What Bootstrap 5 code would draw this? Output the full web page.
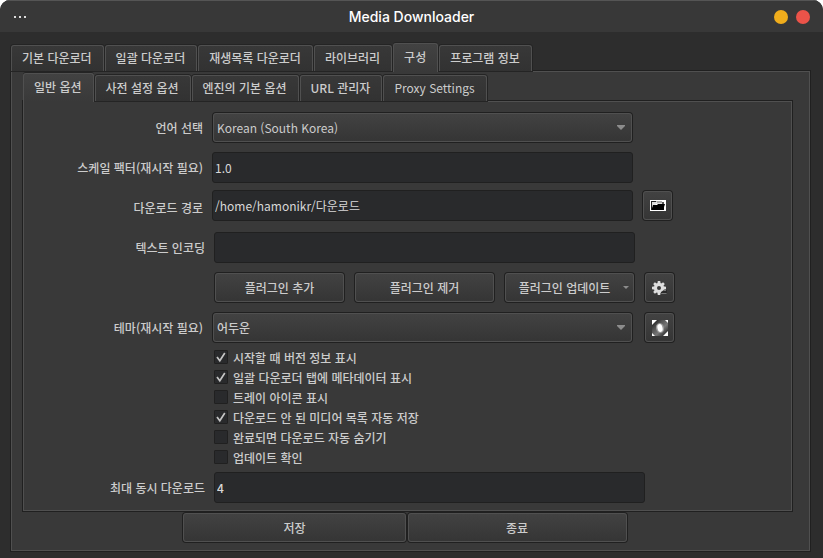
<!DOCTYPE html>
<html lang="ko">
<head>
<meta charset="utf-8">
<meta name="viewport" content="width=device-width, initial-scale=1">
<title>Media Downloader</title>
<link href="https://cdn.jsdelivr.net/npm/bootstrap@5.3.0/dist/css/bootstrap.min.css" rel="stylesheet">
<style>
  :root { --edge: #505050; --rim: #202020; --ink: #cccccc; }
  body { background: #fff; color: var(--ink); font: 500 12px/20px "Noto Sans CJK KR", "Noto Sans", sans-serif; }
  .app-window { background: #2d2d2d; border-radius: 10px 10px 0 0; overflow: hidden; }
  .title-bar { height: 32px; padding: 0 13px; background: #383838; border-top: 1px solid #555; display: grid; grid-template-columns: 1fr auto 1fr; }
  .title-bar h1 { font: 500 14px/20px Inter, sans-serif; color: #fff; }
  .title-bar button { border: 0; padding: 0; background: none; }
  .title-bar .dot-btn { width: 14px; height: 14px; border-radius: 50%; }
  .title-bar .dot-min { background: #f0ad1c; }
  .title-bar .dot-close { background: #eb5349; }
  .page-body { padding: 11px 13px 7px 11px; }
  .tab-strip { gap: 1px; border: 0; position: relative; }
  .tab-strip .nav-link { margin: 0; padding: 2px 11px 3px 10px; color: var(--ink); background: linear-gradient(#383838, #323232); border: 1px solid var(--edge); border-bottom: 0; border-radius: 3px 3px 0 0; box-shadow: 0 0 0 1px #242424; line-height: 20px; }
  .tab-strip .nav-link:hover { color: #fff; border-color: var(--edge); }
  .tab-strip .nav-link.active { color: var(--ink); border-color: var(--edge); background: linear-gradient(#424242, #393939); padding-top: 3px; padding-bottom: 5px; box-shadow: 0 -1px 0 #242424; margin-bottom: -1px; z-index: 1; position: relative; }
  .pane { background: #393939; border: 1px solid var(--edge); box-shadow: 0 0 0 1px var(--rim); }
  .pane-outer { padding: 1px 17px 7px 11px; }
  .pane-inner { padding: 6px 0 2px; }
  .form-line { display: grid; column-gap: 9px; height: 40px; padding-top: 4px; align-items: start; grid-template-columns: 181fr 421fr 147fr; }
  .line-a { grid-template-columns: 179fr 421fr 149fr; }
  .line-theme { grid-template-columns: 179fr 423fr 147fr; }
  .line-spin { grid-template-columns: 181fr 431fr 137fr; }
  .line-path { padding: 2px 0; }
  .form-line > label { text-align: right; white-space: nowrap; line-height: 32px; }
  .line-path > label { align-self: center; }
  .field { height: 31px; padding: 0 2px; font-size: 12px; font-weight: 400; color: #d8d8d8; background: #292a2c; border: 1px solid #202020; border-radius: 3px; }
  .field:focus { color: #fff; background: #292a2c; border-color: #777; box-shadow: none; }
  .field[type=number] { appearance: textfield; -moz-appearance: textfield; font-weight: 500; }
  .field::-webkit-inner-spin-button { appearance: none; -webkit-appearance: none; }
  .raised { height: 29px; margin: 1px; padding: 0; font-size: 12px; font-weight: 500; line-height: 20px; color: var(--ink); background: linear-gradient(#424242, #353535); border: 1px solid var(--edge); border-radius: 3px; box-shadow: 0 0 0 1px var(--rim); }
  .raised:hover, .raised:active { color: #fff !important; border-color: #777 !important; background: linear-gradient(#4a4a4a, #3c3c3c); }
  select.raised { width: auto; padding: 0 24px 0 3px; background: url("data:image/svg+xml,%3Csvg xmlns='http://www.w3.org/2000/svg' width='8' height='5'%3E%3Cpath d='M0 0H8V1L4 5L0 1Z' fill='%238c8c8c'/%3E%3C/svg%3E") no-repeat right 6px center / 8px 5px, linear-gradient(#424242, #353535); }
  .line-theme select.raised { margin-right: 3px; }
  .icon-key { width: 29px; display: flex; align-items: center; justify-content: center; }
  .plugin-keys { display: grid; grid-template-columns: 131fr 141fr 131fr; column-gap: 9px; }
  .plugin-keys .dropdown-toggle { display: grid; grid-template-columns: 1fr auto; align-items: center; padding: 0 4px 0 0; }
  .plugin-keys .dropdown-toggle::after { border-width: 3px 3px 0; color: #8c8c8c; margin: 0; }
  .tick-list { display: grid; grid-template-columns: 181fr 577fr; column-gap: 9px; }
  .tick-list .form-check { min-height: 20px; padding: 0; margin: 0; display: flex; align-items: center; gap: 5px; }
  .tick-list .form-check-input { float: none; width: 14px; height: 14px; margin: 0 0 2px; background: #292a2c; border: 1px solid #202020; border-radius: 1px; }
  .tick-list .form-check-input:checked { background: #292a2c url("data:image/svg+xml,%3Csvg xmlns='http://www.w3.org/2000/svg' width='12' height='12'%3E%3Cpath d='M2 6L4.8 9.8L9.8 2' fill='none' stroke='%23c4c4c4' stroke-width='1.7'/%3E%3C/svg%3E") center / 12px 12px no-repeat; border-color: #202020; }
  .action-row { display: grid; grid-template-columns: 160fr 225fr 222fr 165fr; padding-top: 1px; }
  .action-row .raised:first-child { grid-column: 2; }
</style>
<script src="https://cdn.jsdelivr.net/npm/bootstrap@5.3.0/dist/js/bootstrap.bundle.min.js"></script>
</head>
<body>
<div class="app-window min-vh-100">
  <header class="title-bar align-items-center">
    <button type="button" class="d-flex align-items-center" aria-label="메뉴">
      <svg width="16" height="4" fill="#ddd" aria-hidden="true"><path d="M1 1h2v2H1zM6 1h2v2H6zM11 1h2v2h-2z"/></svg>
    </button>
    <h1 class="m-0">Media Downloader</h1>
    <div class="d-flex justify-content-end gap-2">
      <button type="button" class="dot-btn dot-min" aria-label="최소화"></button>
      <button type="button" class="dot-btn dot-close" aria-label="닫기"></button>
    </div>
  </header>

  <main class="page-body">
    <div class="nav nav-tabs tab-strip align-items-end" role="tablist">
      <button type="button" class="nav-link" role="tab">기본 다운로더</button>
      <button type="button" class="nav-link" role="tab">일괄 다운로더</button>
      <button type="button" class="nav-link" role="tab">재생목록 다운로더</button>
      <button type="button" class="nav-link" role="tab">라이브러리</button>
      <button type="button" class="nav-link active" role="tab" aria-selected="true">구성</button>
      <button type="button" class="nav-link" role="tab">프로그램 정보</button>
    </div>

    <section class="pane pane-outer">
      <div class="nav nav-tabs tab-strip align-items-end" role="tablist">
        <button type="button" class="nav-link active" role="tab" aria-selected="true">일반 옵션</button>
        <button type="button" class="nav-link" role="tab">사전 설정 옵션</button>
        <button type="button" class="nav-link" role="tab">엔진의 기본 옵션</button>
        <button type="button" class="nav-link" role="tab">URL 관리자</button>
        <button type="button" class="nav-link fw-normal" role="tab">Proxy Settings</button>
      </div>

      <form class="pane pane-inner">
        <div class="form-line line-a">
          <label for="lang">언어 선택</label>
          <select id="lang" class="form-select raised fw-normal"><option>Korean (South Korea)</option></select>
        </div>
        <div class="form-line line-a">
          <label for="scale">스케일 팩터(재시작 필요)</label>
          <input id="scale" class="form-control field" type="text" value="1.0">
        </div>
        <div class="form-line line-a line-path">
          <label for="path">다운로드 경로</label>
          <input id="path" class="form-control field" type="text" value="/home/hamonikr/다운로드">
          <button type="button" class="btn raised icon-key" aria-label="폴더 선택">
            <svg width="16" height="11" aria-hidden="true"><path fill="#fff" d="M0 0h16v11H0z"/><path fill="#222" d="M1 1h1v9H1zM2 1h4v1H2z"/><path fill="#aaa" d="M6 1h6v2H7z"/><path fill="#555" d="M12 2h2v2h-2z"/><path fill="#ddd" d="M2 2h4v1h6v1H6L4 6H2z"/><path fill="#000" d="M3 5h4l1-1h7l-1 3v3H2V8z"/></svg>
          </button>
        </div>
        <div class="form-line">
          <label for="enc">텍스트 인코딩</label>
          <input id="enc" class="form-control field" type="text">
        </div>
        <div class="form-line">
          <span></span>
          <div class="plugin-keys">
            <button type="button" class="btn raised">플러그인 추가</button>
            <button type="button" class="btn raised">플러그인 제거</button>
            <button type="button" class="btn raised dropdown-toggle"><span>플러그인 업데이트</span></button>
          </div>
          <button type="button" class="btn raised icon-key" aria-label="플러그인 설정">
            <svg width="16" height="16" aria-hidden="true"><g fill="#dedede"><circle cx="7" cy="8" r="5"/><path d="M5.8 1h2.4l.5 3H5.3zM5.8 15h2.4l.5-3H5.3zM0 6.8v2.4l3 .5V6.3zM14 6.8v2.4l-3 .5V6.3z"/><path d="M5.8 1h2.4l.5 3H5.3zM5.8 15h2.4l.5-3H5.3zM0 6.8v2.4l3 .5V6.3zM14 6.8v2.4l-3 .5V6.3z" transform="rotate(45 7 8)"/></g><circle cx="7" cy="8" r="2" fill="#3b3b3b"/><path fill="#2a2a2a" d="M9 12l3-2h3v3H9z"/><path fill="#777" d="M11 11l1-1h2v1zM8 14l2-1h4l1 1z"/></svg>
          </button>
        </div>
        <div class="form-line line-theme">
          <label for="theme">테마(재시작 필요)</label>
          <select id="theme" class="form-select raised"><option>어두운</option></select>
          <button type="button" class="btn raised icon-key" aria-label="테마 폴더">
            <svg width="16" height="16" aria-hidden="true"><defs><linearGradient id="ring" x1="0" y1="0" x2="1" y2="1"><stop offset="0" stop-color="#111"/><stop offset=".35" stop-color="#555"/><stop offset=".6" stop-color="#777"/><stop offset="1" stop-color="#111"/></linearGradient></defs><path fill="#fff" d="M0 0h16v16H0z"/><path fill="url(#ring)" d="M5 0h8l3 3v8l-5 5H3l-3-3V5z"/><ellipse cx="8" cy="8" rx="4" ry="5" fill="#999" transform="rotate(-15 8 8)"/><ellipse cx="8" cy="8" rx="2.5" ry="4" fill="#fff" transform="rotate(-15 8 8)"/></svg>
          </button>
        </div>

        <div class="tick-list">
          <span></span>
          <div>
            <div class="form-check"><input class="form-check-input" type="checkbox" id="c1" checked><label for="c1">시작할 때 버전 정보 표시</label></div>
            <div class="form-check"><input class="form-check-input" type="checkbox" id="c2" checked><label for="c2">일괄 다운로더 탭에 메타데이터 표시</label></div>
            <div class="form-check"><input class="form-check-input" type="checkbox" id="c3"><label for="c3">트레이 아이콘 표시</label></div>
            <div class="form-check"><input class="form-check-input" type="checkbox" id="c4" checked><label for="c4">다운로드 안 된 미디어 목록 자동 저장</label></div>
            <div class="form-check"><input class="form-check-input" type="checkbox" id="c5"><label for="c5">완료되면 다운로드 자동 숨기기</label></div>
            <div class="form-check"><input class="form-check-input" type="checkbox" id="c6"><label for="c6">업데이트 확인</label></div>
          </div>
        </div>

        <div class="form-line line-spin">
          <label for="max">최대 동시 다운로드</label>
          <input id="max" class="form-control field" type="number" value="4">
        </div>
      </form>

      <div class="action-row">
        <button type="button" class="btn raised">저장</button>
        <button type="button" class="btn raised">종료</button>
      </div>
    </section>
  </main>
</div>
</body>
</html>
